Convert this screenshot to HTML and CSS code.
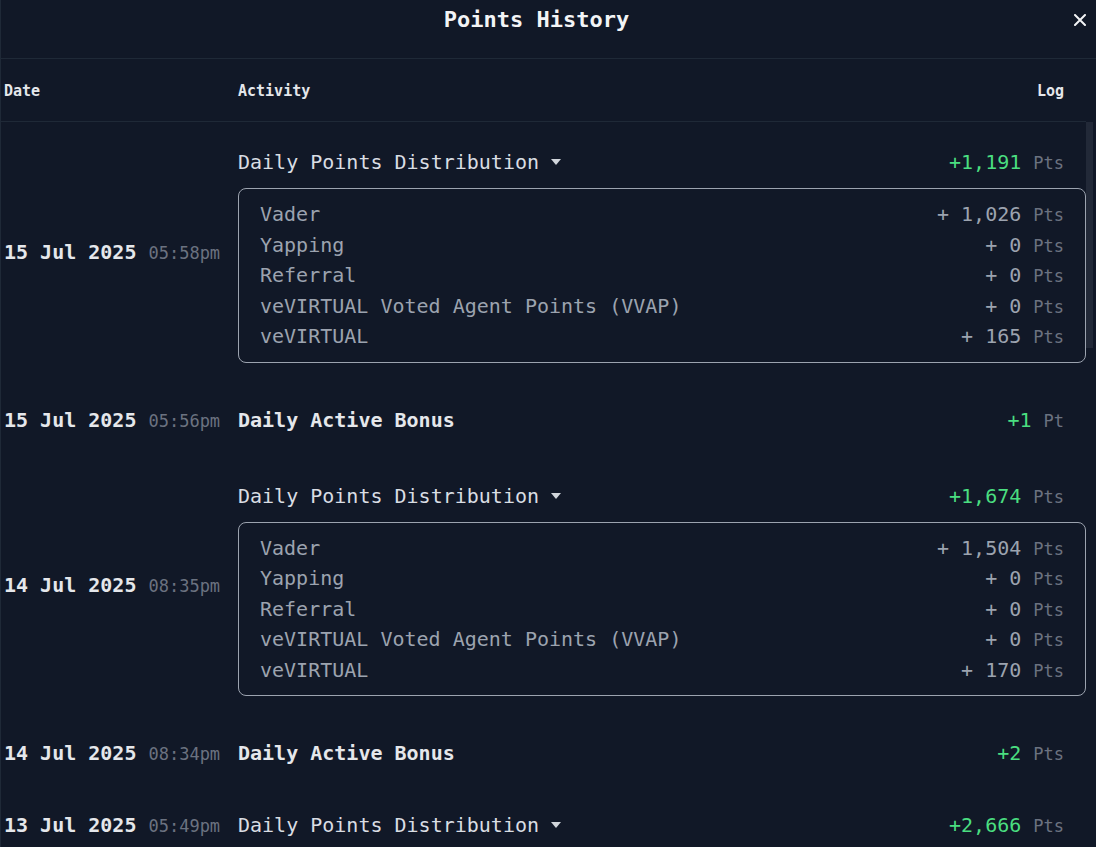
FILE: index.html
```html
<!DOCTYPE html>
<html lang="en">
<head>
    <meta charset="UTF-8">
    <meta name="viewport" content="width=device-width, initial-scale=1.0">
    <title>Points History</title>
    <link rel="stylesheet" href="styles.css">
</head>
<body>
    <div class="modal">
        <div class="modal-head">
            <h2 class="modal-title">Points History</h2>
            <button class="close" aria-label="Close">
                <svg width="12" height="12" viewBox="0 0 12 12"><path d="M1 1L11 11M11 1L1 11" stroke="#f3f4f6" stroke-width="2" stroke-linecap="round"/></svg>
            </button>
        </div>

        <div class="table-head">
            <span>Date</span>
            <span>Activity</span>
            <span class="log">Log</span>
        </div>

        <div class="modal-body">
            <div class="history" id="history"></div>
            <div class="scrollbar"><div class="thumb"></div></div>
        </div>
    </div>

    <script>
        const caret = '<svg class="caret" width="10" height="6" viewBox="0 0 10 6"><path d="M0 0H10L5 6Z" fill="#d1d5db"/></svg>';

        // newest first: distribution row, then the daily bonus row
        const history = [
            { date: '15 Jul 2025', time: '05:58pm', type: 'dist', total: '1,191', open: true,
              items: [['Vader', '1,026'], ['Yapping', '0'], ['Referral', '0'], ['veVIRTUAL Voted Agent Points (VVAP)', '0'], ['veVIRTUAL', '165']] },
            { date: '15 Jul 2025', time: '05:56pm', type: 'bonus', total: '1' },
            { date: '14 Jul 2025', time: '08:35pm', type: 'dist', total: '1,674', open: true,
              items: [['Vader', '1,504'], ['Yapping', '0'], ['Referral', '0'], ['veVIRTUAL Voted Agent Points (VVAP)', '0'], ['veVIRTUAL', '170']] },
            { date: '14 Jul 2025', time: '08:34pm', type: 'bonus', total: '2' },
            { date: '13 Jul 2025', time: '05:49pm', type: 'dist', total: '2,666' },
            { date: '13 Jul 2025', time: '05:47pm', type: 'bonus', total: '3' }
        ];

        function unit(total) {
            return total === '1' ? 'Pt' : 'Pts';
        }

        function renderRow(row) {
            let activity;
            if (row.type === 'dist') {
                activity = `
                    <div class="act-head">
                        <button class="toggle">Daily Points Distribution${caret}</button>
                        <span><span class="amt">+${row.total}</span><span class="unit">${unit(row.total)}</span></span>
                    </div>`;
                if (row.items) {
                    activity += '<div class="breakdown">' + row.items.map(([name, pts]) => `
                        <div class="item">
                            <span>${name}</span>
                            <span>+ ${pts}<span class="unit">Pts</span></span>
                        </div>`).join('') + '</div>';
                }
            } else {
                activity = `
                    <div class="act-head">
                        <span class="bonus">Daily Active Bonus</span>
                        <span><span class="amt">+${row.total}</span><span class="unit">${unit(row.total)}</span></span>
                    </div>`;
            }

            return `
                <div class="row${row.open ? ' open' : ''}">
                    <div class="date">${row.date}<span class="time">${row.time}</span></div>
                    <div class="activity">${activity}</div>
                </div>`;
        }

        const list = document.getElementById('history');
        list.innerHTML = history.map(renderRow).join('');

        list.addEventListener('click', function(e) {
            const btn = e.target.closest('.toggle');
            if (btn) btn.closest('.row').classList.toggle('open');
        });
    </script>
</body>
</html>
```

FILE: styles.css
```css
* { box-sizing: border-box; }
html, body { margin: 0; height: 100%; }
body { background-color: #111827; color: #e5e7eb; font-family: "DejaVu Sans Mono", "Liberation Mono", monospace; overflow: hidden; }
button { font: inherit; color: inherit; background: none; border: none; padding: 0; cursor: pointer; }

.modal { height: 100vh; display: flex; flex-direction: column; border-left: 1px solid #1f2937; }

.modal-head { display: flex; align-items: flex-start; height: 59px; border-bottom: 1px solid #1f2937; }
.modal-title { flex: 1; margin: 0; padding-left: 4px; text-align: center; font-size: 22px; line-height: 40px; font-weight: bold; color: #f3f4f6; }
.close { width: 24px; height: 40px; margin-right: 4px; display: flex; align-items: center; justify-content: center; }

.table-head { display: grid; grid-template-columns: 234px 1fr auto; align-items: center; height: 63px; margin-right: 10px; padding: 2px 22px 0 3px; border-bottom: 1px solid #1f2937; font-size: 15px; font-weight: bold; color: #e5e7eb; }

.modal-body { flex: 1; min-height: 0; display: flex; }
.history { flex: 1; overflow: hidden; }
.scrollbar { width: 10px; padding-right: 3px; }
.thumb { height: 226px; background-color: #222938; }

.row { display: grid; grid-template-columns: 234px 1fr; align-items: center; padding: 21px 0 21px 3px; }
.row.open { padding-top: 25px; }

.date { font-size: 20px; font-weight: bold; color: #e5e7eb; white-space: nowrap; }
.row.open .date { margin-bottom: 6px; }
.time { margin-left: 12px; font-size: 17px; font-weight: normal; color: #6b7280; }

.act-head { display: flex; justify-content: space-between; align-items: center; height: 30px; padding-right: 22px; font-size: 20px; line-height: 30px; }
.toggle { display: inline-flex; align-items: center; color: #d9dde3; line-height: 30px; }
.caret { margin-left: 12px; }
.bonus { font-weight: bold; color: #e5e7eb; }
.amt { color: #4ade80; }
.unit { margin-left: 12px; font-size: 17px; line-height: 1; color: #6b7280; }

.breakdown { display: none; margin-top: 11px; padding: 10px 21px; border: 1px solid #9ca3af; border-radius: 8px; font-size: 20px; line-height: 30.5px; color: #9ca3af; }
.row.open .breakdown { display: block; }
.item { display: flex; justify-content: space-between; align-items: center; height: 30.5px; }
```
